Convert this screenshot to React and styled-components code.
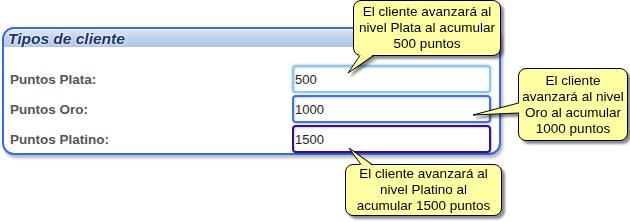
import { Fragment } from "react";
import styled, { createGlobalStyle } from "styled-components";

const GlobalStyle = createGlobalStyle`
  html, body {
    margin: 0;
    padding: 0;
    background: #ffffff;
  }
  body {
    font-family: "Liberation Sans", Arial, sans-serif;
  }
`;

const Stage = styled.div`
  position: relative;
  width: 630px;
  height: 222px;
  overflow: hidden;
  padding-top: 27px;
  padding-left: 2px;
  box-sizing: border-box;
`;

const Panel = styled.section`
  box-sizing: border-box;
  width: 499px;
  height: 128px;
  border: 2px solid #3468f0;
  border-radius: 12px;
  box-shadow: 2px 3px 3px rgba(0, 0, 0, 0.28);
  background: #ffffff;
`;

const Header = styled.div`
  margin-top: 1px;
  height: 17px;
  padding-left: 4px;
  display: flex;
  align-items: center;
  background: linear-gradient(to bottom, #dce6f5 0%, #c0d1ec 45%, #b2c5e7 100%);
  border-top-left-radius: 10px;
  border-top-right-radius: 10px;
`;

const Title = styled.h2`
  margin: 0;
  font-size: 15.5px;
  font-weight: bold;
  font-style: italic;
  color: #17336f;
  text-shadow: 0 0 3px #ffffff, 0 0 2px #ffffff;
  line-height: 17px;
`;

const Form = styled.div`
  display: grid;
  grid-template-columns: 282px 199px;
  row-gap: 2px;
  padding: 18px 8px 0 6px;
`;

const Label = styled.label`
  display: flex;
  align-items: center;
  height: 28px;
  font-size: 13.5px;
  font-weight: bold;
  color: #555555;
`;

const borders = {
  plata: { color: "#8ec6ee", glow: "0 0 3px rgba(120, 190, 255, 0.9)" },
  oro: { color: "#3a72f2", glow: "1px 1px 2px rgba(0, 0, 0, 0.25)" },
  platino: { color: "#3a0c86", glow: "1px 1px 2px rgba(0, 0, 0, 0.25)" },
};

const Field = styled.input`
  box-sizing: border-box;
  width: 199px;
  height: 28px;
  margin: 0;
  padding: 0 0 0 1px;
  border: 2px solid ${({ $level }) => borders[$level].color};
  border-radius: 4px;
  background: #ffffff;
  box-shadow: inset 1px 1px 2px rgba(0, 0, 0, 0.18),
    ${({ $level }) => borders[$level].glow};
  font-family: "Liberation Sans", Arial, sans-serif;
  font-size: 13px;
  color: #222222;
  outline: none;
`;

const Tip = styled.div`
  position: absolute;
  left: ${({ $x }) => $x}px;
  top: ${({ $y }) => $y}px;
  filter: drop-shadow(3px 3px 1px rgba(0, 0, 0, 0.45));
`;

const Bubble = styled.div`
  box-sizing: border-box;
  width: ${({ $w }) => $w}px;
  height: ${({ $h }) => $h}px;
  display: flex;
  flex-direction: column;
  justify-content: center;
  align-items: center;
  background: #ffffa3;
  border: 1px solid #000000;
  border-radius: 8px;
  font-size: 13.5px;
  line-height: 16px;
  color: #000000;
  white-space: nowrap;
`;

const Tail = styled.svg`
  position: absolute;
  left: 0;
  top: 0;
  width: 1px;
  height: 1px;
  overflow: visible;
`;

function Tooltip({ x, y, w, h, fill, stroke, lines }) {
  return (
    <Tip $x={x} $y={y}>
      <Bubble $w={w} $h={h}>
        {lines.map((l) => (
          <span key={l}>{l}</span>
        ))}
      </Bubble>
      <Tail>
        <polygon points={fill} fill="#ffffa3" />
        <polyline points={stroke} fill="none" stroke="#000" strokeWidth="1" />
      </Tail>
    </Tip>
  );
}

const rows = [
  { label: "Puntos Plata:", value: "500", level: "plata" },
  { label: "Puntos Oro:", value: "1000", level: "oro" },
  { label: "Puntos Platino:", value: "1500", level: "platino" },
];

export default function App() {
  return (
    <>
      <GlobalStyle />
      <Stage>
        <Panel>
          <Header>
            <Title>Tipos de cliente</Title>
          </Header>
          <Form>
            {rows.map((r) => (
              <Fragment key={r.level}>
                <Label>{r.label}</Label>
                <Field $level={r.level} value={r.value} readOnly />
              </Fragment>
            ))}
          </Form>
        </Panel>

        <Tooltip
          x={353}
          y={0}
          w={148}
          h={56}
          fill="7,54 21,54 -5,73"
          stroke="7,55.5 -5,73 21,55.5"
          lines={["El cliente avanzará al", "nivel Plata al acumular", "500 puntos"]}
        />
        <Tooltip
          x={518}
          y={68}
          w={110}
          h={73}
          fill="1.5,35 1.5,45 -45,47"
          stroke="0.5,35 -45,47 0.5,45"
          lines={["El cliente", "avanzará al nivel", "Oro al acumular", "1000 puntos"]}
        />
        <Tooltip
          x={345}
          y={164}
          w={157}
          h={52}
          fill="16,1.5 27,1.5 4,-16"
          stroke="16,0.5 4,-16 27,0.5"
          lines={["El cliente avanzará al", "nivel Platino al", "acumular 1500 puntos"]}
        />
      </Stage>
    </>
  );
}
